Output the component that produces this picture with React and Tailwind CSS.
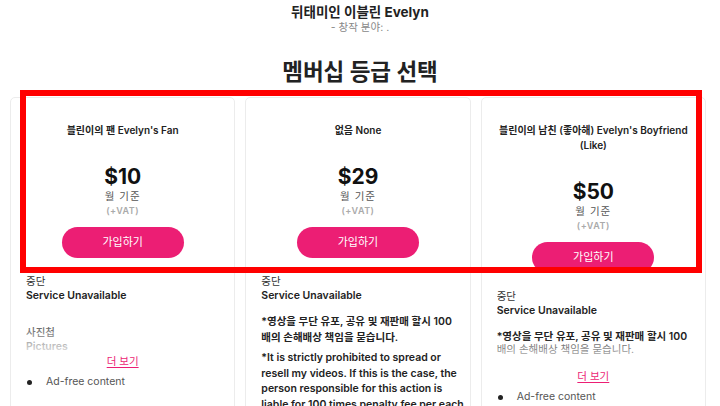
import React from 'react';

const PLANS = [
  { key: 'fan', title: ["블린이의 팬 Evelyn's Fan"], price: '$10' },
  { key: 'none', title: ['없음 None'], price: '$29' },
  { key: 'bf', title: ["블린이의 남친 (좋아해) Evelyn's Boyfriend", '(Like)'], price: '$50' },
];

function Bullet({ children }) {
  return (
    <li className="flex items-center leading-[14px]">
      <span className="ml-px w-[5px] h-[5px] rounded-full bg-[#222] shrink-0" />
      <span className="ml-[14px] text-[#555]">{children}</span>
    </li>
  );
}

function MoreLink() {
  return (
    <div className="text-center leading-[14px]">
      <a href="#" className="text-[#ec1e74] underline underline-offset-2">더 보기</a>
    </div>
  );
}

function Fade() {
  return <div className="absolute inset-x-0 bottom-0 h-[32px] bg-linear-to-b from-white/0 to-white/90" />;
}

function PlanCard({ plan, children }) {
  return (
    <div className="flex-1 min-w-0 min-h-[330px] border border-[#ececec] rounded-[5px] pt-[25px] px-[15px] bg-white">
      <div className="flex flex-col items-center text-center">
        <div className="text-[10px] leading-[15px] font-semibold text-[#222]">
          {plan.title.map(line => (
            <div key={line} className="whitespace-nowrap">{line}</div>
          ))}
        </div>
        <div className="mt-[26px] text-[21px] leading-[26px] font-bold text-[#111]">{plan.price}</div>
        <div className="text-[10.5px] leading-[14px] text-[#555] tracking-[1px]">월 기준</div>
        <div className="mt-px text-[9px] leading-[12px] font-semibold text-[#aaa] tracking-[0.5px]">(+VAT)</div>
        <button className="mt-[10px] w-[122px] h-[31px] rounded-full bg-[#ec1e74] text-white text-[11px]">
          가입하기
        </button>
      </div>
      <div className="mt-[17px] text-[10.5px]">{children}</div>
    </div>
  );
}

export default function App() {
  return (
    <div className="relative w-[720px] h-[406px] overflow-hidden bg-white font-[Inter,'Noto_Sans_CJK_KR',sans-serif]">
      <header className="pt-[3px] text-center">
        <h1 className="text-[13.5px] leading-[18px] font-bold text-[#222]">뒤태미인 이블린 Evelyn</h1>
        <p className="text-[10.5px] leading-[14px] text-[#888]">- 창작 분야: .</p>
        <h2 className="mt-[22px] text-[22.5px] leading-[30px] font-bold text-[#222]">멤버십 등급 선택</h2>
      </header>

      <div className="mt-[10px] pl-[10px] pr-[14px] flex gap-[10px]">
        <PlanCard plan={PLANS[0]}>
          <div className="relative h-[80px] overflow-hidden">
            <p className="leading-[14px] text-[#333]">중단</p>
            <p className="leading-[14px] font-semibold text-[#222]">Service Unavailable</p>
            <p className="mt-[23px] leading-[14px] font-medium text-[#555]">사진첩</p>
            <p className="leading-[14px] font-semibold text-[#555]">Pictures</p>
            <Fade />
          </div>
          <MoreLink />
          <ul className="mt-[6px]">
            <Bullet>Ad-free content</Bullet>
          </ul>
        </PlanCard>

        <PlanCard plan={PLANS[1]}>
          <p className="leading-[14px] text-[#333]">중단</p>
          <p className="leading-[14px] font-semibold text-[#222]">Service Unavailable</p>
          <p className="mt-[11px] leading-[15.5px] font-semibold text-[#222] whitespace-nowrap">
            *영상을 무단 유포, 공유 및 재판매 할시 100<br />
            배의 손해배상 책임을 묻습니다.
          </p>
          <p className="mt-[5px] leading-[15.5px] font-semibold text-[#222] whitespace-nowrap">
            *It is strictly prohibited to spread or<br />
            resell my videos. If this is the case, the<br />
            person responsible for this action is<br />
            liable for 100 times penalty fee per each
          </p>
        </PlanCard>

        <PlanCard plan={PLANS[2]}>
          <div className="relative h-[80px] overflow-hidden">
            <p className="leading-[14px] text-[#333]">중단</p>
            <p className="leading-[14px] font-semibold text-[#222]">Service Unavailable</p>
            <p className="mt-[12px] leading-[13px] font-semibold text-[#222] whitespace-nowrap">
              *영상을 무단 유포, 공유 및 재판매 할시 100
            </p>
            <p className="leading-[13px] text-[#555] whitespace-nowrap">배의 손해배상 책임을 묻습니다.</p>
            <Fade />
          </div>
          <MoreLink />
          <ul className="mt-[6px]">
            <Bullet>Ad-free content</Bullet>
          </ul>
        </PlanCard>
      </div>

      {/* highlight frame drawn over the cards */}
      <div className="absolute left-[20px] top-[90px] w-[682px] h-[183px] border-[6px] border-[#ff0000] pointer-events-none" />
    </div>
  );
}
